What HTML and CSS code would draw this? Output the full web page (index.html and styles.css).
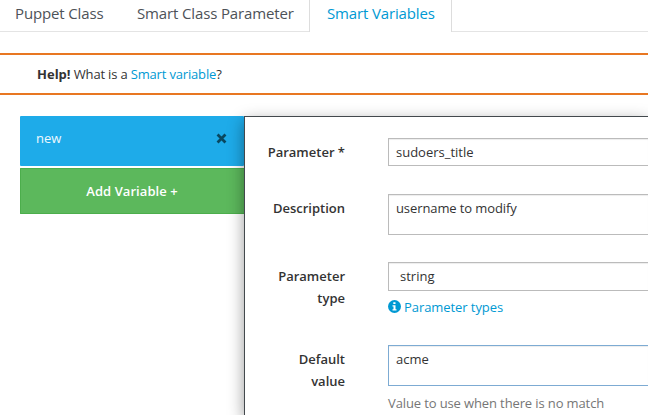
FILE: index.html
```html
<!DOCTYPE html>
<html lang="en">
<head>
<meta charset="utf-8">
<title>Smart Variables</title>
<link rel="stylesheet" href="styles.css">
</head>
<body>
<nav class="tabs">
  <a class="tab tab-class">Puppet Class</a>
  <a class="tab tab-param">Smart Class Parameter</a>
  <a class="tab tab-active">Smart Variables</a>
</nav>
<div class="alert"><strong>Help!</strong> What is a <a class="link">Smart variable</a>?</div>
<main class="content">
  <aside class="side">
    <div class="pill"><span>new</span>
      <svg class="close" viewBox="0 0 10 10"><path d="M1.4 1.4L8.6 8.6M8.6 1.4L1.4 8.6" /></svg>
    </div>
    <button class="add">Add Variable +</button>
  </aside>
  <section class="panel">
    <div class="row row-name">
      <label class="label">Parameter *</label>
      <div class="field"><div class="control">sudoers_title</div></div>
    </div>
    <div class="row row-desc">
      <label class="label">Description</label>
      <div class="field"><div class="control area description">username to modify</div></div>
    </div>
    <div class="row row-type">
      <label class="label">Parameter<br>type</label>
      <div class="field">
        <div class="control select">string</div>
        <a class="link hint"><svg class="info" viewBox="0 0 13 13"><circle cx="6.5" cy="6.5" r="6.5" /><path d="M5.3 2.2h2.2v1.9H5.3zM4.5 5.2h3v4h1v1.4h-4V9.2h1V6.6h-1z" /></svg>Parameter types</a>
      </div>
    </div>
    <div class="row row-default">
      <label class="label">Default<br>value</label>
      <div class="field">
        <div class="control area focused">acme</div>
        <p class="help">Value to use when there is no match</p>
      </div>
    </div>
  </section>
</main>
</body>
</html>
```
FILE: styles.css
```css
* { box-sizing: border-box; }
body {
  display: flex;
  flex-direction: column;
  margin: 0;
  height: 415px;
  overflow: hidden;
  background: #fff;
  color: #333;
  font: 13px/22px "Open Sans", sans-serif;
}
.link { color: #0099d3; }
.tabs {
  display: flex;
  flex: none;
  height: 32px;
  border-bottom: 1px solid #e4e4e4;
  color: #4d5258;
  font-size: 15px;
  letter-spacing: -.14px;
  line-height: 26px;
  white-space: nowrap;
}
.tab { height: 32px; }
.tab-class { width: 122px; padding-left: 15px; }
.tab-param { width: 187px; padding-left: 15px; }
.tab-active {
  width: 143px;
  padding-left: 17px;
  border: solid #ddd;
  border-width: 0 1px;
  background: #fff;
  color: #0099d3;
}
.alert {
  flex: none;
  height: 42px;
  margin-top: 21px;
  padding: 8px 37px;
  border: solid #e87722;
  border-width: 2px 0;
  letter-spacing: -.17px;
}
.alert strong { letter-spacing: 0; }
.content {
  display: flex;
  flex: 1;
  min-height: 0;
  margin-top: 21px;
  padding-left: 20px;
}
.side { width: 224px; }
.pill {
  display: flex;
  justify-content: space-between;
  height: 50px;
  padding: 11px 17px 0 16px;
  border-radius: 1px;
  background: #1eabe9;
  color: #eef8fd;
}
.close { width: 11px; height: 11px; margin-top: 6px; }
.close path { stroke: #09475f; stroke-width: 2.5; fill: none; }
.add {
  display: block;
  width: 100%;
  height: 46px;
  margin: 2px 0 0;
  padding: 0 1px 0 0;
  border: 1px solid #4cae4c;
  border-right: 0;
  border-radius: 1px 0 0 1px;
  background: #5cb85c;
  color: #fff;
  font: 600 13px/22px "Open Sans", sans-serif;
  letter-spacing: .06px;
}
.panel {
  position: relative;
  flex: 1;
  padding-top: 21px;
  border: solid #43494d;
  border-width: 1px 0 0 1px;
  background: #fff;
  box-shadow: 0 5px 15px rgba(3, 3, 3, .4);
}
.row { display: flex; }
.row-name { height: 56px; }
.row-desc { height: 68px; }
.row-type { height: 83px; }
.row-default { height: 69px; }
.label {
  width: 100px;
  margin-right: 43px;
  padding-top: 3px;
  font-weight: 600;
  text-align: right;
}
.field { flex: 1; }
.control {
  height: 28px;
  padding: 2px 7px;
  border: 1px solid #bbb;
  border-right: 0;
  box-shadow: inset 0 1px 1px rgba(3, 3, 3, .075);
}
.area { height: 41px; }
.description { letter-spacing: -.1px; }
.select { height: 29px; padding-left: 11px; }
.focused { border-color: #7dabd3; }
.hint { display: flex; align-items: center; margin-top: 5px; letter-spacing: -.07px; }
.info { width: 13px; height: 13px; margin: -1px 3px 0 0; fill: #0099d3; }
.info path { fill: #fff; }
.help { margin: 6px 0 0; color: #767676; letter-spacing: -.12px; }
```
